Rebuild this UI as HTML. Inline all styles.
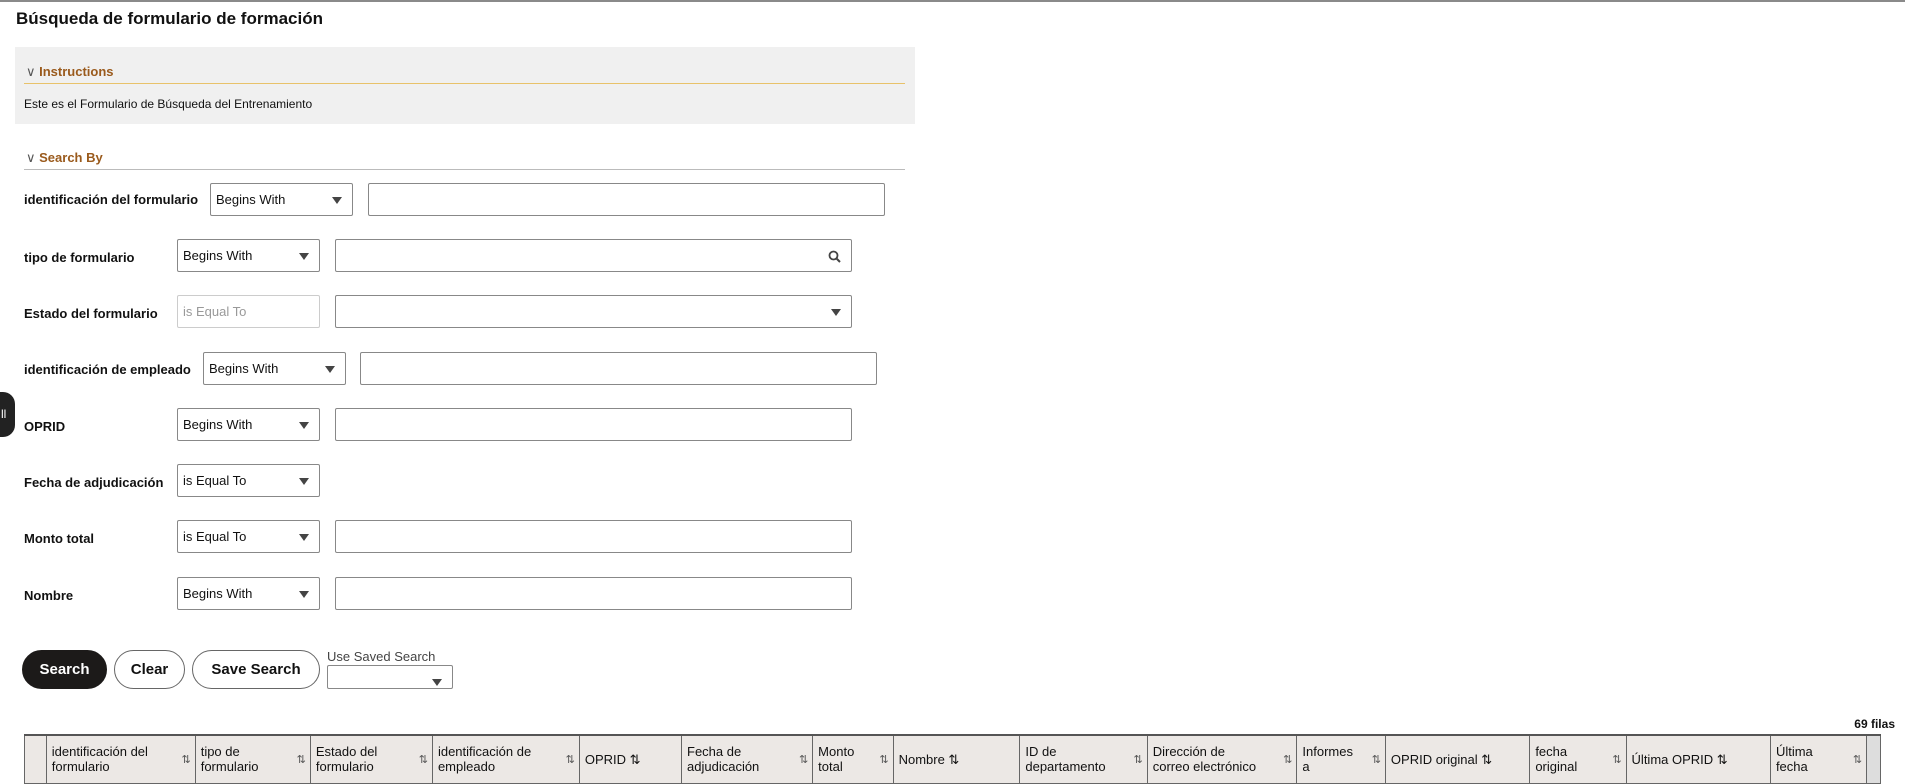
<!DOCTYPE html>
<html><head><meta charset="utf-8"><style>
*{box-sizing:border-box;margin:0;padding:0}
body{width:1905px;height:782px;overflow:hidden;background:#fff;font-family:"Liberation Sans",Arial,sans-serif;color:#111;position:relative}
.a{position:absolute}
.topline{left:0;top:0;width:1905px;height:2px;background:#8a8a8a}
h1{position:absolute;left:16px;top:9px;font-size:17px;font-weight:bold}
.ibox{left:15px;top:47px;width:900px;height:77px;background:#f0f0f0}
.hdr{font-size:13px;font-weight:bold;color:#9a5a1c}
.line{height:1px;background:#e8c26a}
.lbl{font-size:13px;font-weight:bold;left:24px}
.sel{height:33px;border:1px solid #888;border-radius:2px;background:#fff;font-size:13px;padding:0 0 0 5px;line-height:31px}
.sel:after{content:"";position:absolute;right:10px;top:13px;border-left:5px solid transparent;border-right:5px solid transparent;border-top:7px solid #444}
.sel.dis{border-color:#ccc;color:#999}
.sel.dis:after{display:none}
.inp{height:33px;border:1px solid #888;border-radius:2px;background:#fff}
.btn{top:650px;height:39px;border:1px solid #666;border-radius:20px;font-size:15px;font-weight:bold;text-align:center;line-height:37px;background:#fff}
table{position:absolute;left:24px;top:734px;border-collapse:collapse;font-size:13px;width:1857px}
td{background:#ece8e5;border:1px solid #666;border-top:2px solid #555;height:48px;vertical-align:middle;padding:0 5px;position:relative;line-height:15px}
.s{position:absolute;right:4px;top:17px;font-size:11px;color:#555}
</style></head><body>
<div class="a topline"></div>
<h1>Búsqueda de formulario de formación</h1>
<div class="a ibox"></div>
<div class="a hdr" style="left:26px;top:64px"><span style="font-weight:normal;color:#555">∨</span> Instructions</div>
<div class="a line" style="left:24px;top:83px;width:881px"></div>
<div class="a" style="left:24px;top:97px;font-size:12px">Este es el Formulario de Búsqueda del Entrenamiento</div>
<div class="a hdr" style="left:26px;top:150px"><span style="font-weight:normal;color:#555">∨</span> Search By</div>
<div class="a line" style="left:24px;top:169px;width:881px;background:#bbb"></div>

<div class="a lbl" style="top:192px">identificación del formulario</div>
<div class="a sel" style="left:210px;top:183px;width:143px">Begins With</div>
<div class="a inp" style="left:368px;top:183px;width:517px"></div>

<div class="a lbl" style="top:250px">tipo de formulario</div>
<div class="a sel" style="left:177px;top:239px;width:143px">Begins With</div>
<div class="a inp" style="left:335px;top:239px;width:517px"></div>
<svg class="a" style="left:828px;top:250px" width="13" height="13" viewBox="0 0 13 13"><circle cx="5.5" cy="5.5" r="4" fill="none" stroke="#444" stroke-width="1.8"/><line x1="8.5" y1="8.5" x2="12" y2="12" stroke="#444" stroke-width="2"/></svg>

<div class="a lbl" style="top:306px">Estado del formulario</div>
<div class="a sel dis" style="left:177px;top:295px;width:143px">is Equal To</div>
<div class="a sel" style="left:335px;top:295px;width:517px"></div>

<div class="a lbl" style="top:362px">identificación de empleado</div>
<div class="a sel" style="left:203px;top:352px;width:143px">Begins With</div>
<div class="a inp" style="left:360px;top:352px;width:517px"></div>

<div class="a lbl" style="top:419px">OPRID</div>
<div class="a sel" style="left:177px;top:408px;width:143px">Begins With</div>
<div class="a inp" style="left:335px;top:408px;width:517px"></div>

<div class="a lbl" style="top:475px">Fecha de adjudicación</div>
<div class="a sel" style="left:177px;top:464px;width:143px">is Equal To</div>

<div class="a lbl" style="top:531px">Monto total</div>
<div class="a sel" style="left:177px;top:520px;width:143px">is Equal To</div>
<div class="a inp" style="left:335px;top:520px;width:517px"></div>

<div class="a lbl" style="top:588px">Nombre</div>
<div class="a sel" style="left:177px;top:577px;width:143px">Begins With</div>
<div class="a inp" style="left:335px;top:577px;width:517px"></div>

<div class="a" style="left:0;top:392px;width:15px;height:45px;background:#222;border-radius:0 12px 12px 0;color:#fff;font-size:12px;line-height:45px;padding-left:1px">ll</div>

<div class="a btn" style="left:22px;width:85px;background:#1c1a19;color:#fff;border-color:#1c1a19">Search</div>
<div class="a btn" style="left:114px;width:71px">Clear</div>
<div class="a btn" style="left:192px;width:128px">Save Search</div>
<div class="a" style="left:327px;top:649px;font-size:13px;color:#444">Use Saved Search</div>
<div class="a sel" style="left:327px;top:665px;width:126px;height:24px;border-color:#888"></div>

<div class="a" style="right:10px;top:717px;font-size:12px;font-weight:bold">69 filas</div>
<table><tr>
<td style="width:22px"></td>
<td style="width:150px">identificación del<br>formulario<span class="s">⇅</span></td>
<td style="width:116px">tipo de<br>formulario<span class="s">⇅</span></td>
<td style="width:123px">Estado del<br>formulario<span class="s">⇅</span></td>
<td style="width:148px">identificación de<br>empleado<span class="s">⇅</span></td>
<td style="width:103px">OPRID ⇅</td>
<td style="width:132px">Fecha de<br>adjudicación<span class="s">⇅</span></td>
<td style="width:81px">Monto<br>total<span class="s">⇅</span></td>
<td style="width:128px">Nombre ⇅</td>
<td style="width:128px">ID de<br>departamento<span class="s">⇅</span></td>
<td style="width:151px">Dirección de<br>correo electrónico<span class="s">⇅</span></td>
<td style="width:89px">Informes<br>a<span class="s">⇅</span></td>
<td style="width:146px">OPRID original ⇅</td>
<td style="width:97px">fecha<br>original<span class="s">⇅</span></td>
<td style="width:146px">Última OPRID ⇅</td>
<td style="width:97px">Última<br>fecha<span class="s">⇅</span></td>
<td style="width:14px;padding:0;background:#ddd"></td>
</tr></table>
</body></html>
